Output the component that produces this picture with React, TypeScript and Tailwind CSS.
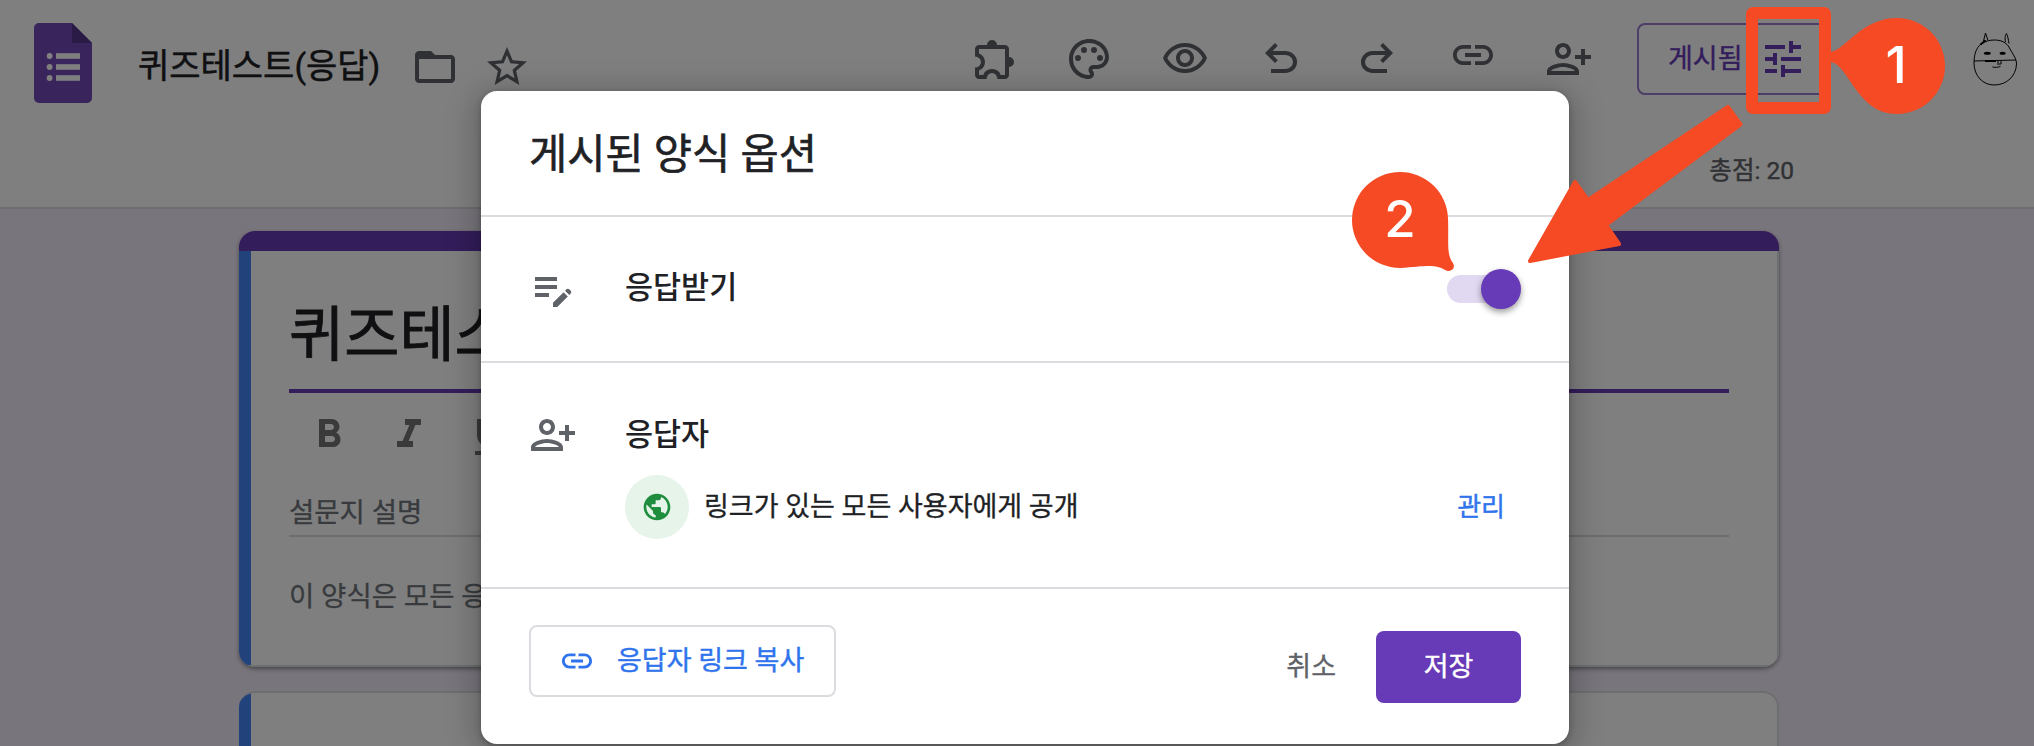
import type { ReactNode } from "react";

const FONT = "font-['Roboto','Noto_Sans_CJK_KR',sans-serif]";

const ICONS = {
  folder:
    "M20 6h-8l-2-2H4c-1.1 0-1.99.9-1.99 2L2 18c0 1.1.9 2 2 2h16c1.1 0 2-.9 2-2V8c0-1.1-.9-2-2-2zm0 12H4V8h16v10z",
  star: "M22 9.24l-7.19-.62L12 2 9.19 8.63 2 9.24l5.46 4.73L5.82 21 12 17.27 18.18 21l-1.63-7.03L22 9.24zM12 15.4l-3.76 2.27 1-4.28-3.32-2.88 4.38-.38L12 6.1l1.71 4.04 4.38.38-3.32 2.88 1 4.28L12 15.4z",
  palette:
    "M12 22C6.49 22 2 17.51 2 12S6.49 2 12 2s10 4.04 10 9c0 3.31-2.69 6-6 6h-1.77c-.28 0-.5.22-.5.5 0 .12.05.23.13.33.41.47.64 1.06.64 1.67A2.5 2.5 0 0 1 12 22zm0-18c-4.41 0-8 3.59-8 8s3.59 8 8 8c.28 0 .5-.22.5-.5a.54.54 0 0 0-.14-.35c-.41-.46-.63-1.05-.63-1.65a2.5 2.5 0 0 1 2.5-2.5H16c2.21 0 4-1.79 4-4 0-3.86-3.59-7-8-7zM6.5 10a1.5 1.5 0 1 0 0 3 1.5 1.5 0 1 0 0-3zM9.5 6a1.5 1.5 0 1 0 0 3 1.5 1.5 0 1 0 0-3zM14.5 6a1.5 1.5 0 1 0 0 3 1.5 1.5 0 1 0 0-3zM17.5 10a1.5 1.5 0 1 0 0 3 1.5 1.5 0 1 0 0-3z",
  eye: "M12 6c3.79 0 7.17 2.13 8.82 5.5C19.17 14.87 15.79 17 12 17s-7.17-2.13-8.82-5.5C4.83 8.13 8.21 6 12 6m0-2C7 4 2.73 7.11 1 11.5 2.73 15.89 7 19 12 19s9.27-3.11 11-7.5C21.27 7.11 17 4 12 4zm0 5c1.38 0 2.5 1.12 2.5 2.5S13.38 14 12 14s-2.5-1.12-2.5-2.5S10.62 9 12 9m0-2c-2.48 0-4.5 2.02-4.5 4.5S9.52 16 12 16s4.5-2.02 4.5-4.5S14.48 7 12 7z",
  link: "M3.9 12c0-1.71 1.39-3.1 3.1-3.1h4V7H7c-2.76 0-5 2.24-5 5s2.24 5 5 5h4v-1.9H7c-1.71 0-3.1-1.39-3.1-3.1zM8 13h8v-2H8v2zm9-6h-4v1.9h4c1.71 0 3.1 1.39 3.1 3.1s-1.39 3.1-3.1 3.1h-4V17h4c2.76 0 5-2.24 5-5s-2.24-5-5-5z",
  personAdd:
    "M13 8c0-2.21-1.79-4-4-4S5 5.79 5 8s1.79 4 4 4 4-1.79 4-4zm-2 0c0 1.1-.9 2-2 2s-2-.9-2-2 .9-2 2-2 2 .9 2 2zM1 18v2h16v-2c0-2.66-5.33-4-8-4s-8 1.34-8 4zm2 0c.2-.71 3.3-2 6-2 2.69 0 5.78 1.28 6 2H3zm17-3v-3h3v-2h-3V7h-2v3h-3v2h3v3h2z",
  tune: "M3 17v2h6v-2H3zM3 5v2h10V5H3zm10 16v-2h8v-2h-8v-2h-2v6h2zM7 9v2H3v2h4v2h2V9H7zm14 4v-2H11v2h10zm-6-4h2V7h4V5h-4V3h-2v6z",
  editNote:
    "M3 10h11v2H3v-2zm0-2h11V6H3v2zm0 8h7v-2H3v2zm15.01-3.13.71-.71c.39-.39 1.02-.39 1.41 0l.71.71c.39.39.39 1.02 0 1.41l-.71.71-2.12-2.12zm-.71.71-5.3 5.3V21h2.12l5.3-5.3-2.12-2.12z",
  globe:
    "M12 2C6.48 2 2 6.48 2 12s4.48 10 10 10 10-4.48 10-10S17.52 2 12 2zm-1 17.93c-3.95-.49-7-3.85-7-7.93 0-.62.08-1.21.21-1.79L9 15v1c0 1.1.9 2 2 2v1.93zm6.9-2.54c-.26-.81-1-1.39-1.9-1.39h-1v-3c0-.55-.45-1-1-1H8v-2h2c.55 0 1-.45 1-1V7h2c1.1 0 2-.9 2-2v-.41c2.93 1.19 5 4.06 5 7.41 0 2.08-.8 3.97-2.1 5.39z",
  bold: "M15.6 10.79c.97-.67 1.65-1.77 1.65-2.79 0-2.26-1.75-4-4-4H7v14h7.04c2.09 0 3.71-1.7 3.71-3.79 0-1.52-.86-2.82-2.15-3.42zM10 6.5h3c.83 0 1.5.67 1.5 1.5s-.67 1.5-1.5 1.5h-3v-3zm3.5 9H10v-3h3.5c.83 0 1.5.67 1.5 1.5s-.67 1.5-1.5 1.5z",
  italic: "M10 4v3h2.21l-3.42 8H6v3h8v-3h-2.21l3.42-8H18V4z",
  underline:
    "M12 17c3.31 0 6-2.69 6-6V3h-2.5v8c0 1.93-1.57 3.5-3.5 3.5S8.5 12.93 8.5 11V3H6v8c0 3.31 2.69 6 6 6zm-7 2v2h14v-2H5z",
};

// these two are drawn on the 960 grid
const WIDE_ICONS = {
  extension:
    "M352-120H200q-33 0-56.5-23.5T120-200v-152q48 0 84-30.5t36-77.5q0-47-36-77.5T120-568v-152q0-33 23.5-56.5T200-800h160q0-42 29-71t71-29q42 0 71 29t29 71h160q33 0 56.5 23.5T800-720v160q42 0 71 29t29 71q0 42-29 71t-71 29v160q0 33-23.5 56.5T720-120H568q0-50-31.5-85T460-240q-45 0-76.5 35T352-120Zm-152-80h85q24-66 77-93t98-27q45 0 98 27t77 93h85v-520H200v88q54 20 87 67t33 105q0 57-33 104t-87 68v88Z",
  undo: "M280-200v-80h284q63 0 109.5-40T720-420q0-60-46.5-100T564-560H312l104 104-56 56-200-200 200-200 56 56-104 104h252q97 0 167 63t70 157q0 94-70 157t-167 63H280Z",
};

function Icon({ name, className = "size-12" }: { name: keyof typeof ICONS; className?: string }) {
  return (
    <svg viewBox="0 0 24 24" fill="currentColor" className={`shrink-0 ${className}`}>
      <path d={ICONS[name]} />
    </svg>
  );
}

function WideIcon({ name, className = "" }: { name: keyof typeof WIDE_ICONS; className?: string }) {
  return (
    <svg viewBox="0 -960 960 960" fill="currentColor" className={`size-12 shrink-0 ${className}`}>
      <path d={WIDE_ICONS[name]} />
    </svg>
  );
}

function FormsLogo() {
  return (
    <svg viewBox="0 0 58 80" className="mt-[23px] h-20 w-[58px] shrink-0">
      <path d="M5 0h33l20 20v55a5 5 0 0 1-5 5H5a5 5 0 0 1-5-5V5a5 5 0 0 1 5-5z" fill="#7248b9" />
      <path d="M38 0l20 20H38z" fill="#55368c" />
      {[33, 44, 55].map((y) => (
        <g key={y} fill="#fff">
          <circle cx="15.6" cy={y} r="2.9" />
          <rect x="22" y={y - 2.8} width="24" height="5.6" />
        </g>
      ))}
    </svg>
  );
}

function Avatar() {
  return (
    <svg viewBox="0 0 46 54" fill="none" stroke="#000" className="mt-8 h-[54px] w-[46px] shrink-0">
      <path d="M9 12C4 16 2 23 2 31c0 13 9 22 20 22 13 0 22-9 22.500-21 0-6-4-10-7-16-3-6-9-8-15-8-5 0-9 1-13 4" />
      <path d="M11.500 9l2-8 2.500 7.500M33.500 10c-1-4 0-8 1-8.500 1 2 2 6 2.500 10M9 13l5-5M2 29l42-1M26 29v4M29 29v3h-2M20.500 35c3 .6 5.500.5 8-.7" />
      <path d="M8.500 12.500l5-4M13 29h11" strokeWidth="1.800" />
      <g fill="#000" stroke="none">
        <ellipse cx="15.300" cy="21.300" rx="3.500" ry="1.500" />
        <ellipse cx="30.600" cy="21.200" rx="3" ry="1.500" />
      </g>
    </svg>
  );
}

function TopBar() {
  return (
    <header className="flex h-[209px] w-full flex-col border-b-2 border-[#dadce0] bg-white">
      <div className="flex h-[150px] items-start pl-[34px]">
        <FormsLogo />
        <h1 className="mt-[42px] ml-[46px] w-[273px] text-[34px] leading-[48px] whitespace-nowrap text-[#202124] [-webkit-text-stroke:0.5px]">
          퀴즈테스트(응답)
        </h1>
        <div className="mt-[43px] flex gap-6 text-[#5f6368]">
          <Icon name="folder" />
          <Icon name="star" />
        </div>
        <div className="mt-[35px] ml-[438px] flex gap-12 text-[#5f6368]">
          <WideIcon name="extension" className="mt-0.5" />
          <Icon name="palette" />
          <Icon name="eye" />
          <WideIcon name="undo" />
          <WideIcon name="undo" className="-scale-x-100" />
          <Icon name="link" className="-mt-1 size-12" />
          <Icon name="personAdd" />
        </div>
        <button className="mt-[23px] ml-11 flex h-[72px] w-[190px] shrink-0 items-center rounded-lg border-2 border-[#9a7bd0] pl-[29px] text-[27px] whitespace-nowrap text-[#673ab7] [-webkit-text-stroke:0.4px]">
          <span className="w-[91px] text-left">게시됨</span>
          <Icon name="tune" />
        </button>
        <div className="ml-[145px]">
          <Avatar />
        </div>
      </div>
      <p className="mt-px mr-[240px] self-end text-[24.5px] leading-10 text-[#5f6368] [-webkit-text-stroke:0.4px]">
        총점: 20
      </p>
    </header>
  );
}

function FormCards() {
  return (
    <main className="mx-auto mt-[22px] flex w-[1540px] -translate-x-2 flex-col gap-6">
      <section className="flex h-[436px] flex-col overflow-hidden rounded-2xl bg-white shadow-[0_2px_4px_rgba(0,0,0,0.4)]">
        <div className="h-5 shrink-0 bg-[#673ab7]" />
        <div className="flex flex-1 border-r-2 border-b-2 border-[#dadce0]">
          <div className="w-3 shrink-0 bg-[#4285f4]" />
          <div className="flex w-[1478px] flex-col pl-[38px]">
            <h2 className="mt-10 border-b-4 border-[#673ab7] pb-2 text-[60px] leading-[90px] whitespace-nowrap text-[#202124] [-webkit-text-stroke:0.8px]">
              퀴즈테스트(응답)
            </h2>
            <div className="mt-[18px] flex gap-8 pl-4 text-[#757575]">
              <Icon name="bold" />
              <Icon name="italic" />
              <Icon name="underline" className="mt-0.5 size-12" />
            </div>
            <p className="mt-[31px] border-b-2 border-[#dadada] pb-px text-[27.5px] leading-[42px] text-[#70757a] [-webkit-text-stroke:0.3px]">
              설문지 설명
            </p>
            <p className="mt-[39px] text-[27.5px] leading-[42px] text-[#70757a] [-webkit-text-stroke:0.3px]">
              이 양식은 모든 응답자
            </p>
          </div>
        </div>
      </section>
      <section className="flex h-40 overflow-hidden rounded-2xl border-t-2 border-r-2 border-[#dadce0] bg-white">
        <div className="-mt-0.5 w-3 bg-[#4285f4]" />
      </section>
    </main>
  );
}

function Toggle() {
  return (
    <div className="relative h-7 w-[74px]">
      <div className="h-7 w-[70px] rounded-full bg-[#e1d8f1]" />
      <div className="absolute -top-1.5 right-0 size-10 rounded-full bg-[#673ab7] shadow-[0_3px_6px_rgba(0,0,0,0.4)]" />
    </div>
  );
}

function Row({ className, children }: { className: string; children: ReactNode }) {
  return <div className={`flex border-b-2 border-[#dadce0] px-12 ${className}`}>{children}</div>;
}

function PublishDialog() {
  return (
    <div
      role="dialog"
      className="flex h-[653px] w-[1088px] flex-col rounded-2xl bg-white text-[#202124] shadow-[0_6px_30px_8px_rgba(0,0,0,0.2),0_2px_6px_rgba(0,0,0,0.25)]"
    >
      <Row className="h-[126px] items-center pt-[3px]">
        <h2 className="text-[41.5px] leading-[60px] [-webkit-text-stroke:0.6px]">게시된 양식 옵션</h2>
      </Row>

      <Row className="h-[146px] items-center">
        <Icon name="editNote" className="size-12 text-[#5f6368]" />
        <h3 className="-mt-0.5 ml-12 flex-1 text-[30.5px] font-medium">응답받기</h3>
        <Toggle />
      </Row>

      <Row className="h-[226px] pt-12">
        <Icon name="personAdd" className="size-12 text-[#5f6368]" />
        <div className="ml-12 flex-1">
          <h3 className="text-[30.5px] leading-[48px] font-medium">응답자</h3>
          <div className="mt-4 flex h-16 items-center text-[27px]">
            <div className="flex size-16 items-center justify-center rounded-full bg-[#e6f4ea]">
              <Icon name="globe" className="size-8 text-[#1e8e3e]" />
            </div>
            <p className="ml-[15px] flex-1 [-webkit-text-stroke:0.3px]">링크가 있는 모든 사용자에게 공개</p>
            <button className="mr-4 text-[26px] text-[#2f74ec] [-webkit-text-stroke:0.4px]">관리</button>
          </div>
        </div>
      </Row>

      <div className="flex items-start px-12 pt-9">
        <button className="flex h-[72px] w-[307px] items-center rounded-lg border-2 border-[#dadce0] pl-7 text-[27px] text-[#2f74ec] [-webkit-text-stroke:0.4px]">
          <Icon name="link" className="size-9" />
          <span className="ml-[22px]">응답자 링크 복사</span>
        </button>
        <button className="mt-1.5 ml-auto h-[72px] text-[27px] text-[#5f6368] [-webkit-text-stroke:0.3px]">취소</button>
        <button className="mt-1.5 ml-10 h-[72px] w-[145px] rounded-lg bg-[#673ab7] text-[27px] text-white [-webkit-text-stroke:0.4px]">
          저장
        </button>
      </div>
    </div>
  );
}

// orange tutorial marks laid over the whole screen
function Annotations() {
  return (
    <svg viewBox="0 0 2034 746" className="absolute inset-0 h-[746px] w-[2034px]" fill="#f64a24">
      <rect x="1752" y="13" width="73" height="95" fill="none" stroke="#f64a24" strokeWidth="12" rx="1" strokeLinejoin="round" />
      <path d="M1831 52C1846 49 1862 18 1897 18A48 48 0 0 1 1897 114C1857 114 1849 65 1831 62Z" />
      <path d="M1400 172A48 48 0 0 1 1448 218C1449 242 1446 254 1453 263C1456 268 1451 273 1445 270C1436 264 1426 266 1400 268A48 48 0 0 1 1400 172Z" />
      <path
        d="M1728 107L1740.500 124.500L1606 225L1619 244L1530 261L1575 182L1588 200Z"
        stroke="#f64a24"
        strokeWidth="4"
        strokeLinejoin="round"
      />
      <g fill="#fff" fontFamily="Inter, Roboto, sans-serif" fontSize="51" fontWeight="500" textAnchor="middle">
        <text x="1896" y="83">1</text>
        <text x="1400" y="237">2</text>
      </g>
    </svg>
  );
}

export default function App() {
  return (
    <div className={`relative h-[746px] w-[2034px] overflow-hidden bg-[#f0ebf8] ${FONT}`}>
      <TopBar />
      <FormCards />
      <div className="absolute inset-0 bg-black/50 pt-[91px] pl-[481px]">
        <PublishDialog />
      </div>
      <Annotations />
    </div>
  );
}
